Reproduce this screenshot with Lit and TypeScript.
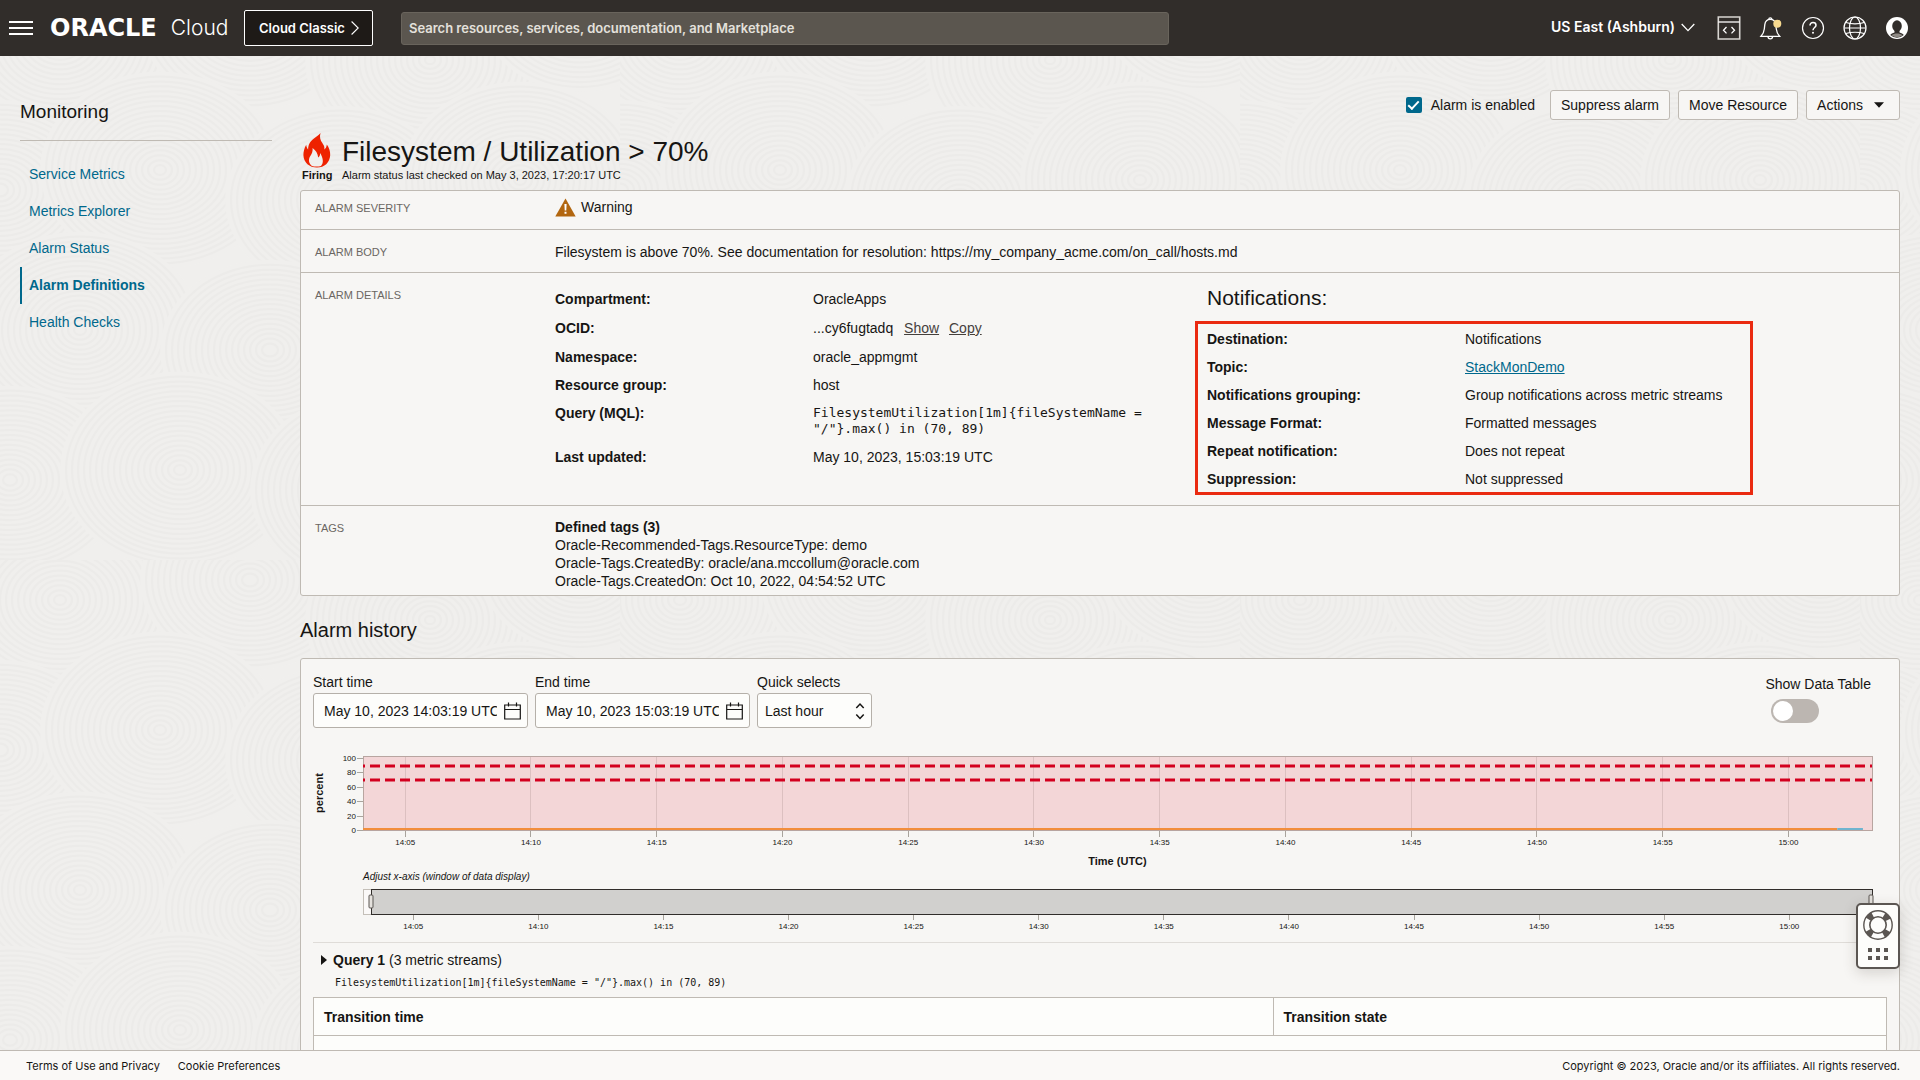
import { LitElement, html, svg, css } from "lit";
import { customElement, property } from "lit/decorators.js";

interface Threshold {
  y: number;
}

const TIMES = ["14:05", "14:10", "14:15", "14:20", "14:25", "14:30", "14:35", "14:40", "14:45", "14:50", "14:55", "15:00"];
const Y_LEVELS = [100, 80, 60, 40, 20, 0];

@customElement("metric-chart")
export class MetricChart extends LitElement {
  @property({ attribute: false }) thresholds: Threshold[] = [{ y: 18 }, { y: 32 }];

  static styles = css`
    :host {
      display: block;
      padding: 0 15px 0 50px;
    }
    svg {
      display: block;
      width: 100%;
      height: 188px;
      overflow: visible;
      font-family: "Liberation Sans", Arial, sans-serif;
    }
    .tick-label {
      font-size: 8px;
      fill: #161513;
    }
    .axis-title {
      font-size: 11px;
      font-weight: 700;
      fill: #161513;
    }
    .hint {
      font-size: 10px;
      font-style: italic;
      fill: #161513;
    }
    .tick {
      stroke: #a9a49d;
      shape-rendering: crispEdges;
    }
    .grid {
      stroke: #dcc0c0;
      shape-rendering: crispEdges;
    }
    .plot {
      fill: #f3d6d7;
      stroke: #b8a5a0;
      shape-rendering: crispEdges;
    }
    .threshold {
      stroke: #d3001f;
      stroke-width: 3;
      stroke-dasharray: 10 5;
      stroke-dashoffset: 8;
    }
    .series-a {
      stroke: #f28e3c;
      stroke-width: 2;
    }
    .series-b {
      stroke: #6fb4cf;
      stroke-width: 2;
    }
    .track {
      fill: #fbf9f8;
      stroke: #c4bfb8;
      shape-rendering: crispEdges;
    }
    .window {
      fill: #d1d0ce;
    }
    .window-edge {
      stroke: #312d2a;
      shape-rendering: crispEdges;
    }
    .handle {
      fill: #e4e1dd;
      stroke: #5b5652;
    }
  `;

  private pct(start: number, step: number, i: number) {
    return `${start + step * i}%`;
  }

  render() {
    return html`
      <svg role="img" aria-label="Filesystem utilization in percent over time">
        <rect class="plot" x="0" y="8" width="100%" height="74"></rect>
        ${TIMES.map((t, i) => {
          const x = this.pct(2.8, 8.333, i);
          return svg`
            <line class="grid" x1=${x} x2=${x} y1="9" y2="82"></line>
            <line class="tick" x1=${x} x2=${x} y1="83" y2="89"></line>
            <text class="tick-label" x=${x} y="97" text-anchor="middle">${t}</text>`;
        })}
        ${Y_LEVELS.map((v, i) => {
          const y = 10 + Math.round(i * 14.4);
          return svg`
            <line class="tick" x1="-6" x2="0" y1=${y} y2=${y}></line>
            <text class="tick-label" x="-7" y=${y + 3} text-anchor="end">${v}</text>`;
        })}
        ${this.thresholds.map((t) => svg`<line class="threshold" x1="0" x2="100%" y1=${t.y} y2=${t.y}></line>`)}
        <line class="series-a" x1="0" x2="97.7%" y1="81" y2="81"></line>
        <line class="series-b" x1="97.7%" x2="99.4%" y1="81" y2="81"></line>
        <text class="axis-title" transform="translate(-40 45) rotate(-90)" text-anchor="middle">percent</text>
        <text class="axis-title" x="50%" y="117" text-anchor="middle">Time (UTC)</text>
        <text class="hint" x="0" y="132">Adjust x-axis (window of data display)</text>
        <rect class="window" x="0" y="141" width="100%" height="25"></rect>
        <rect class="track" x="0" y="141" width="8" height="25"></rect>
        <line class="window-edge" x1="8" x2="100%" y1="141" y2="141"></line>
        <line class="window-edge" x1="8" x2="100%" y1="166" y2="166"></line>
        <line class="window-edge" x1="8" x2="8" y1="141" y2="166"></line>
        <line class="window-edge" x1="100%" x2="100%" y1="141" y2="166"></line>
        <rect class="handle" x="6" y="147" width="4" height="13" rx="1"></rect>
        <svg x="100%" y="147" overflow="visible">
          <rect class="handle" x="-3" y="0" width="4" height="13" rx="1"></rect>
        </svg>
        ${TIMES.map((t, i) => {
          const x = this.pct(3.33, 8.29, i);
          return svg`
            <line class="tick" x1=${x} x2=${x} y1="167" y2="172"></line>
            <text class="tick-label" x=${x} y="181" text-anchor="middle">${t}</text>`;
        })}
      </svg>
    `;
  }
}

const NAV = ["Service Metrics", "Metrics Explorer", "Alarm Status", "Alarm Definitions", "Health Checks"];

const NOTIFICATIONS: [string, string, boolean][] = [
  ["Destination:", "Notifications", false],
  ["Topic:", "StackMonDemo", true],
  ["Notifications grouping:", "Group notifications across metric streams", false],
  ["Message Format:", "Formatted messages", false],
  ["Repeat notification:", "Does not repeat", false],
  ["Suppression:", "Not suppressed", false],
];

/* Overlapping ring clusters of the page texture: [cx, cy, outer radius]. */
const CLUSTERS: [number, number, number][] = [
  [60, 40, 120], [250, 20, 110], [430, 60, 125], [580, 10, 100],
  [0, 190, 110], [160, 170, 120], [340, 200, 115], [520, 180, 120],
  [80, 330, 120], [270, 350, 110], [450, 320, 125], [600, 350, 110],
  [10, 480, 115], [180, 470, 120], [370, 490, 120], [550, 470, 115],
];

const texture = CLUSTERS.flatMap(([cx, cy, r]) => {
  const rings = [];
  for (let k = r; k > 3; k -= 6) {
    rings.push(svg`<ellipse cx=${cx} cy=${cy} rx=${k} ry=${k * 0.82} class=${k === r ? "base" : "ring"}></ellipse>`);
  }
  return rings;
});

const calendar = html`<svg width="17" height="18" viewBox="0 0 17 18" fill="none" stroke="#161513" stroke-width="1.2" aria-hidden="true">
  <path d="M.7 3h15.6v14H.7zM.7 7.5h15.6M4.5 .5v4M12.5 .5v4"></path>
</svg>`;

@customElement("app-root")
export class AppRoot extends LitElement {
  static styles = css`
    :host {
      display: flex;
      flex-direction: column;
      position: relative;
      height: 100vh;
      overflow: hidden;
      background: #f0efed;
      color: #161513;
      font: 14px/16px "Liberation Sans", Arial, sans-serif;
    }
    * {
      box-sizing: border-box;
    }
    h1, h2, h3, p, dl, dd, dt, ul {
      margin: 0;
      padding: 0;
      font-weight: 400;
    }
    button, input, select {
      font: inherit;
      color: inherit;
      margin: 0;
    }
    a {
      color: #00688c;
    }
    .texture {
      position: absolute;
      inset: 0;
      width: 100%;
      height: 100%;
    }
    .base {
      fill: #f0efed;
      stroke: none;
    }
    .ring {
      fill: none;
      stroke: #ecebe9;
      stroke-width: 2;
    }

    /* top bar */
    .topbar {
      position: relative;
      display: flex;
      align-items: center;
      flex: none;
      height: 56px;
      padding: 0 11px 0 9px;
      background: #312d2a;
      color: #fff;
      font-family: Inter, "Liberation Sans", sans-serif;
      font-weight: 600;
    }
    .icon-btn {
      display: flex;
      padding: 0;
      border: 0;
      background: none;
      color: #fff;
    }
    .brand {
      display: flex;
      align-items: center;
      gap: 14px;
      width: 194px;
      margin-left: 17px;
      color: #fff;
      text-decoration: none;
      line-height: 28px;
    }
    .brand-mark {
      font-family: "DejaVu Sans", sans-serif;
      font-size: 24px;
      font-weight: 700;
    }
    .brand-name {
      font-size: 21px;
      font-weight: 300;
    }
    .classic {
      display: flex;
      align-items: center;
      gap: 6px;
      height: 36px;
      padding: 0 13px 0 14px;
      border: 1px solid #fff;
      border-radius: 2px;
      background: #1e1a17;
      color: #fff;
      font-size: 13px;
    }
    .search {
      flex: 0 1 768px;
      height: 33px;
      margin-left: 28px;
      padding: 0 7px;
      border: 1px solid #69645c;
      border-radius: 3px;
      background: #5b564f;
      color: #fff;
      font-size: 13px;
    }
    .search::placeholder {
      color: #e4e1dc;
      opacity: 1;
    }
    .tools {
      display: flex;
      align-items: center;
      gap: 18px;
      margin-left: auto;
    }
    .region {
      align-items: center;
      gap: 6px;
      margin-right: 4px;
      padding-bottom: 2px;
    }

    /* page frame */
    .page {
      position: relative;
      display: grid;
      grid-template-columns: 252px minmax(0, 1fr);
      column-gap: 28px;
      flex: 1;
      min-height: 0;
      overflow: hidden;
      padding: 0 20px;
    }
    .side-title {
      padding: 46px 0 18px;
      border-bottom: 1px solid #bfbab3;
      font-size: 19px;
      line-height: 20px;
    }
    .nav {
      list-style: none;
      padding-top: 15px;
    }
    .nav a {
      display: block;
      padding: 0 7px;
      border-left: 2px solid transparent;
      line-height: 37px;
      text-decoration: none;
    }
    .nav a.current {
      border-color: #00688c;
      font-weight: 700;
    }
    .toolbar {
      display: flex;
      justify-content: flex-end;
      gap: 8px;
      padding-top: 34px;
    }
    .enabled {
      display: flex;
      align-items: center;
      gap: 9px;
      margin-right: 7px;
    }
    .check {
      appearance: none;
      display: grid;
      place-items: center;
      width: 16px;
      height: 16px;
      border-radius: 2px;
      background: #00688c;
    }
    .check::after {
      content: "";
      width: 9px;
      height: 4px;
      margin-bottom: 3px;
      border: solid #fff;
      border-width: 0 0 2px 2px;
      transform: rotate(-47deg);
    }
    .btn {
      display: flex;
      align-items: center;
      gap: 11px;
      height: 30px;
      padding: 0 10px;
      border: 1px solid #bfbab3;
      border-radius: 3px;
      background: #f7f6f4;
    }
    .btn-menu {
      padding-right: 15px;
    }
    .heading {
      display: grid;
      grid-template-columns: 30px 1fr;
      grid-template-rows: 35px 15px;
      column-gap: 10px;
      padding: 13px 0 7px 2px;
    }
    .heading h1 {
      font-size: 28px;
      line-height: 38px;
    }
    .small {
      font-size: 11px;
      line-height: 15px;
    }
    .flame {
      justify-self: center;
    }
    .strong {
      font-weight: 700;
    }

    /* summary panel */
    .panel {
      border: 1px solid #bfbab3;
      border-radius: 3px;
      background: #f7f6f4;
    }
    .row {
      display: grid;
      grid-template-columns: 240px minmax(0, 1fr);
      padding: 14px 0 12px 14px;
      border-bottom: 1px solid #bfbab3;
    }
    .row:last-child {
      border-bottom: 0;
    }
    .row-severity {
      padding: 6px 0 10px 14px;
    }
    .row-details {
      padding: 11px 0 10px 14px;
    }
    .row-tags {
      padding: 12px 0 5px 14px;
      line-height: 18px;
    }
    .caption {
      color: #6b6662;
      font-size: 11px;
    }
    .row-severity .caption {
      line-height: 22px;
    }
    .row-details .caption {
      padding-top: 3px;
    }
    .row-tags .caption {
      line-height: 20px;
    }
    .severity {
      display: flex;
      align-items: center;
      gap: 5px;
      height: 20px;
    }
    .details {
      display: grid;
      grid-template-columns: 10fr 11fr;
    }
    .pairs {
      display: grid;
      grid-template-columns: 258px 340px;
      row-gap: 12px;
      align-content: start;
    }
    .pairs dt {
      font-weight: 700;
    }
    .pairs-left {
      grid-template-rows: 17px 17px;
      padding-top: 7px;
    }
    .mono {
      font-family: "DejaVu Sans Mono", monospace;
      font-size: 13px;
    }
    .mono-small {
      font-family: "DejaVu Sans Mono", monospace;
      font-size: 10px;
      line-height: 14px;
    }
    .pairs .show-link {
      margin: 0 6px 0 7px;
    }
    .plain-link {
      color: #45403c;
    }
    .sub-title {
      padding-left: 12px;
      font-size: 21px;
      line-height: 28px;
    }
    .callout {
      grid-template-columns: 258px max-content;
      width: fit-content;
      margin-top: 9px;
      padding: 7px 27px 5px 9px;
      border: 3px solid #ea2a10;
    }

    /* history */
    .section-title {
      padding: 20px 0 14px;
      font-size: 20px;
      line-height: 28px;
    }
    .history {
      padding: 15px 12px 0;
    }
    .filters {
      display: flex;
      gap: 7px;
      margin-bottom: 20px;
    }
    .field {
      display: flex;
      flex-direction: column;
      gap: 3px;
    }
    .box {
      display: flex;
      align-items: center;
      gap: 7px;
      width: 215px;
      height: 35px;
      padding: 0 6px 0 10px;
      border: 1px solid #b5b0a9;
      border-radius: 3px;
      background: #fdfdfb;
    }
    .box input {
      flex: 1;
      min-width: 0;
      padding: 0;
      border: 0;
      background: none;
    }
    .select {
      display: grid;
      align-items: center;
    }
    .select select, .select svg {
      grid-area: 1 / 1;
    }
    .select select {
      appearance: none;
      width: 115px;
      height: 35px;
      padding: 0 7px;
      border: 1px solid #b5b0a9;
      border-radius: 3px;
      background: #fdfdfb;
    }
    .select svg {
      justify-self: end;
      margin-right: 7px;
      pointer-events: none;
    }
    .toggle-field {
      gap: 7px;
      margin-left: auto;
      padding: 2px 16px 0 0;
    }
    .toggle {
      appearance: none;
      display: flex;
      width: 48px;
      height: 24px;
      margin-left: 6px;
      padding: 2px;
      border-radius: 12px;
      background: #bcb6b1;
    }
    .toggle::before {
      content: "";
      width: 20px;
      height: 20px;
      border-radius: 50%;
      background: #fff;
    }
    .query {
      margin-top: 6px;
      padding-top: 7px;
      border-top: 1px solid #dfdcd8;
    }
    .query-toggle {
      display: flex;
      align-items: center;
      gap: 6px;
      padding: 0 8px;
      border: 0;
      background: none;
      line-height: 20px;
    }
    .query .mono-small {
      padding: 6px 22px 7px;
    }
    .table {
      width: 100%;
      border: 1px solid #bfbab3;
      border-collapse: collapse;
      background: #fdfdfb;
    }
    .table th {
      height: 38px;
      padding: 0 10px;
      border: 1px solid #bfbab3;
      text-align: left;
    }
    .table th:first-child {
      width: 61%;
    }
    .table td {
      height: 38px;
    }

    /* footer and support widget */
    .footer {
      position: relative;
      display: flex;
      align-items: center;
      gap: 18px;
      flex: none;
      height: 30px;
      padding: 0 20px 0 26px;
      border-top: 1px solid #bfbab3;
      background: #faf9f7;
      font: 11px/16px Inter, "Liberation Sans", sans-serif;
    }
    .footer a {
      color: inherit;
      text-decoration: none;
    }
    .footer p {
      margin-left: auto;
    }
    .support {
      position: absolute;
      right: 20px;
      bottom: 111px;
      display: flex;
      flex-direction: column;
      align-items: center;
      gap: 8px;
      width: 44px;
      height: 66px;
      padding: 5px 0 0;
      border: 2px solid #5b5652;
      border-radius: 5px;
      background: #fdfdfb;
      box-shadow: 0 4px 14px rgba(60, 50, 40, 0.18);
    }
  `;

  private renderTopbar() {
    return html`
      <header class="topbar">
        <button class="icon-btn" aria-label="Menu">
          <svg width="24" height="16" viewBox="0 0 24 16" stroke="#fff" stroke-width="2"><path d="M0 2h24M0 8h24M0 14h24"></path></svg>
        </button>
        <a class="brand" href="#"><span class="brand-mark">ORACLE</span><span class="brand-name">Cloud</span></a>
        <button class="classic">Cloud Classic
          <svg width="8" height="14" viewBox="0 0 8 14" fill="none" stroke="#fff" stroke-width="1.1"><path d="M.6 .5 7.2 7 .6 13.5"></path></svg>
        </button>
        <input class="search" type="search" aria-label="Search" placeholder="Search resources, services, documentation, and Marketplace" />
        <div class="tools">
          <button class="icon-btn region">US East (Ashburn)
            <svg width="14" height="9" viewBox="0 0 14 9" fill="none" stroke="#fff" stroke-width="1.3"><path d="M.7 1 7 7.6 13.3 1"></path></svg>
          </button>
          <button class="icon-btn" aria-label="Developer tools">
            <svg width="24" height="24" viewBox="0 0 24 24" fill="none" stroke="#d8d5d1" stroke-width="1.6">
              <path d="M1.3 1h21.4v22H1.3z"></path><path d="M1.3 6h21.4" stroke="#fff" stroke-width="1.3"></path>
              <path d="M9.5 11l-3 3.2 3 3.2M14.5 11l3 3.2-3 3.2" stroke="#fff" stroke-width="1.3"></path>
            </svg>
          </button>
          <button class="icon-btn" aria-label="Announcements">
            <svg width="24" height="24" viewBox="0 0 24 24" fill="none" stroke="#fff" stroke-width="1.3">
              <path d="M2 20.3c1.7-1.9 3-4.3 3.3-7.3l.5-4.4C6.2 5.6 8.3 3.4 11.3 3.4s5.1 2.2 5.5 5.2l.5 4.4c.3 3 1.6 5.4 3.3 7.3z"></path>
              <path d="M9.8 3.3a1.5 1.5 0 1 1 3 0M9 20.5a2.3 2.3 0 0 0 4.6 0"></path>
              <circle cx="18.3" cy="7.7" r="4" fill="#f7d98f" stroke="none"></circle>
            </svg>
          </button>
          <button class="icon-btn" aria-label="Help">
            <svg width="24" height="24" viewBox="0 0 24 24" fill="none" stroke="#fff" stroke-width="1.2">
              <circle cx="12" cy="12" r="10.5"></circle>
              <path d="M9 9.4c0-1.8 1.3-2.9 3-2.9s3 1.1 3 2.7c0 2.2-3 2.4-3 5" stroke-width="1.5"></path>
              <circle cx="12" cy="16.8" r="1" fill="#fff" stroke="none"></circle>
            </svg>
          </button>
          <button class="icon-btn" aria-label="Language">
            <svg width="24" height="24" viewBox="0 0 24 24" fill="none" stroke="#fff" stroke-width="1.2">
              <circle cx="12" cy="12" r="11"></circle><ellipse cx="12" cy="12" rx="5.5" ry="11"></ellipse>
              <path d="M1 12h22M3 6.5c5 1.7 13 1.7 18 0M3 17.5c5-1.7 13-1.7 18 0"></path>
            </svg>
          </button>
          <button class="icon-btn" aria-label="Profile">
            <svg width="24" height="24" viewBox="0 0 24 24">
              <circle cx="12" cy="12" r="11" fill="#fff"></circle>
              <ellipse cx="12" cy="10" rx="4.8" ry="5.8" fill="#312d2a"></ellipse>
              <path d="M9.5 14h5v2.5c1.8.5 3.5 1.3 4.3 2.5a10 10 0 0 1-13.6 0c.8-1.2 2.5-2 4.3-2.5z" fill="#312d2a"></path>
              <path d="M6.5 19.3c1.5-1.2 3.3-1.8 5.5-1.8s4 .6 5.5 1.8c-3.3 2.5-7.7 2.5-11 0z" fill="#8f8a85"></path>
            </svg>
          </button>
        </div>
      </header>
    `;
  }

  private renderSummary() {
    return html`
      <section class="panel">
        <div class="row row-severity">
          <div class="caption">ALARM SEVERITY</div>
          <div class="severity">
            <svg width="21" height="19" viewBox="0 0 21 19" aria-hidden="true">
              <path d="M10.5 .5 20.7 18.5H.3z" fill="#b2660f"></path>
              <path d="M9.4 6h2.2l-.3 6.500H9.700zM9.500 13.800h2v2h-2z" fill="#fff"></path>
            </svg>
            Warning
          </div>
        </div>
        <div class="row">
          <div class="caption">ALARM BODY</div>
          <p>Filesystem is above 70%. See documentation for resolution: https://my_company_acme.com/on_call/hosts.md</p>
        </div>
        <div class="row row-details">
          <div class="caption">ALARM DETAILS</div>
          <div class="details">
            <dl class="pairs pairs-left">
              <dt>Compartment:</dt><dd>OracleApps</dd>
              <dt>OCID:</dt>
              <dd>...cy6fugtadq <a class="plain-link show-link" href="#">Show</a> <a class="plain-link" href="#">Copy</a></dd>
              <dt>Namespace:</dt><dd>oracle_appmgmt</dd>
              <dt>Resource group:</dt><dd>host</dd>
              <dt>Query (MQL):</dt>
              <dd class="mono">FilesystemUtilization[1m]{fileSystemName = "/"}.max() in (70, 89)</dd>
              <dt>Last updated:</dt><dd>May 10, 2023, 15:03:19 UTC</dd>
            </dl>
            <div>
              <h3 class="sub-title">Notifications:</h3>
              <dl class="pairs callout">
                ${NOTIFICATIONS.map(([k, v, link]) => html`<dt>${k}</dt><dd>${link ? html`<a href="#">${v}</a>` : v}</dd>`)}
              </dl>
            </div>
          </div>
        </div>
        <div class="row row-tags">
          <div class="caption">TAGS</div>
          <div>
            <p class="strong">Defined tags (3)</p>
            <p>Oracle-Recommended-Tags.ResourceType: demo</p>
            <p>Oracle-Tags.CreatedBy: oracle/ana.mccollum@oracle.com</p>
            <p>Oracle-Tags.CreatedOn: Oct 10, 2022, 04:54:52 UTC</p>
          </div>
        </div>
      </section>
    `;
  }

  private renderHistory() {
    return html`
      <h2 class="section-title">Alarm history</h2>
      <section class="panel history">
        <div class="filters">
          <div class="field">
            <label for="start">Start time</label>
            <div class="box"><input id="start" type="text" value="May 10, 2023 14:03:19 UTC" />${calendar}</div>
          </div>
          <div class="field">
            <label for="end">End time</label>
            <div class="box"><input id="end" type="text" value="May 10, 2023 15:03:19 UTC" />${calendar}</div>
          </div>
          <div class="field">
            <label for="quick">Quick selects</label>
            <div class="select">
              <select id="quick"><option>Last hour</option></select>
              <svg width="10" height="18" viewBox="0 0 10 18" fill="none" stroke="#161513" stroke-width="1.5">
                <path d="M1.3 6 5 2l3.7 4M1.3 12.5l3.7 4 3.7-4"></path>
              </svg>
            </div>
          </div>
          <div class="field toggle-field">
            <label for="table-toggle">Show Data Table</label>
            <input id="table-toggle" class="toggle" type="checkbox" role="switch" />
          </div>
        </div>
        <metric-chart></metric-chart>
        <div class="query">
          <button class="query-toggle" aria-expanded="false">
            <svg width="6" height="10" viewBox="0 0 6 10"><path d="M0 0 6 5 0 10z" fill="#161513"></path></svg>
            <span><b>Query 1</b> (3 metric streams)</span>
          </button>
          <p class="mono-small">FilesystemUtilization[1m]{fileSystemName = "/"}.max() in (70, 89)</p>
        </div>
        <table class="table">
          <thead><tr><th>Transition time</th><th>Transition state</th></tr></thead>
          <tbody><tr><td colspan="2"></td></tr></tbody>
        </table>
      </section>
    `;
  }

  render() {
    return html`
      <svg class="texture" aria-hidden="true">
        <defs>
          <pattern id="rings" width="620" height="560" patternUnits="userSpaceOnUse">${texture}</pattern>
        </defs>
        <rect width="100%" height="100%" fill="url(#rings)"></rect>
      </svg>
      ${this.renderTopbar()}
      <div class="page">
        <aside>
          <h2 class="side-title">Monitoring</h2>
          <ul class="nav">
            ${NAV.map((n) => html`<li><a href="#" class=${n === "Alarm Definitions" ? "current" : ""}>${n}</a></li>`)}
          </ul>
        </aside>
        <main>
          <div class="toolbar">
            <label class="enabled"><input class="check" type="checkbox" checked />Alarm is enabled</label>
            <button class="btn">Suppress alarm</button>
            <button class="btn">Move Resource</button>
            <button class="btn btn-menu">Actions
              <svg width="10" height="6" viewBox="0 0 10 6"><path d="M0 .3h10L5 5.7z" fill="#161513"></path></svg>
            </button>
          </div>
          <div class="heading">
            <svg class="flame" width="28" height="35" viewBox="0 0 28 35" aria-hidden="true">
              <path d="M17.5 0c-1.2 4.2-.2 7.3 2 10.3 1.3 1.8 2.2 3.7 1.9 6.200 1.400-1 2.300-2.700 2.400-5 2.400 3.400 3.600 6.900 3.400 10.700C26.800 29.500 21.500 34.500 14 34.500S.6 29.500.4 22.200c0-3.600.9-7 2.800-10.400.2 2 .8 3.400 1.900 4.700C5.200 11.500 7 8.800 10 6.200 12.500 4 15.500 2.500 17.500 0z" fill="#ee2200"></path>
              <path d="M9 33C5.500 30.500 5 26 7.500 22.700c1.600-2.100 2.300-4.700 2.100-7.700 3.200 2.300 5.200 5.500 5.600 9.500 1.200-.7 1.800-2 2-4.500 2.600 4.500 4 9.500.8 13-2.500.7-6.500.7-9 0z" fill="#f0efed"></path>
            </svg>
            <h1>Filesystem / Utilization &gt; 70%</h1>
            <span class="small strong">Firing</span>
            <p class="small">Alarm status last checked on May 3, 2023, 17:20:17 UTC</p>
          </div>
          ${this.renderSummary()} ${this.renderHistory()}
        </main>
      </div>
      <footer class="footer">
        <a href="#">Terms of Use and Privacy</a>
        <a href="#">Cookie Preferences</a>
        <p>Copyright © 2023, Oracle and/or its affiliates. All rights reserved.</p>
      </footer>
      <button class="support" aria-label="Support">
        <svg width="30" height="30" viewBox="0 0 30 30" fill="none" stroke="#5b5652">
          <circle cx="15" cy="15" r="11.2" stroke-width="6.5" stroke-dasharray="6 11.6" stroke-dashoffset="-5.8"></circle>
          <circle cx="15" cy="15" r="14.2" stroke-width="1.4"></circle>
          <circle cx="15" cy="15" r="8.2" stroke-width="1.6"></circle>
        </svg>
        <svg width="20" height="12" viewBox="0 0 20 12" fill="#5b5652">
          <path d="M0 0h4v4H0zM8 0h4v4H8zM16 0h4v4h-4zM0 8h4v4H0zM8 8h4v4H8zM16 8h4v4h-4z"></path>
        </svg>
      </button>
    `;
  }
}
